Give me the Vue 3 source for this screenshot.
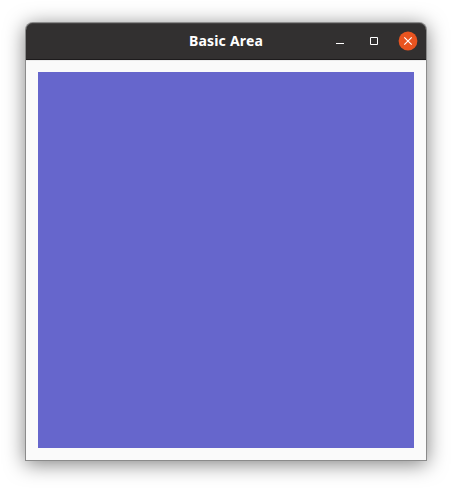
<script setup>
const title = 'Basic Area'
</script>

<template>
  <main class="desktop">
    <section class="window">
      <header class="titlebar">
        <h1 class="title">{{ title }}</h1>
        <div class="controls">
          <button class="control" aria-label="Minimize">
            <svg width="18" height="18" viewBox="0 0 18 18"><path d="M5 11.5h8" stroke="#fff" /></svg>
          </button>
          <button class="control" aria-label="Maximize">
            <svg width="18" height="18" viewBox="0 0 18 18"><path d="M5.5 5.5h7v7h-7z" fill="none" stroke="#fff" /></svg>
          </button>
          <button class="control" aria-label="Close">
            <svg width="18" height="18" viewBox="0 0 18 18">
              <circle cx="9" cy="9" r="9.4" fill="#e95420" />
              <path d="M5.3 5.3l7.4 7.4M12.7 5.3l-7.4 7.4" stroke="#fff" stroke-width="1.2" />
            </svg>
          </button>
        </div>
      </header>
      <div class="content">
        <div class="area"></div>
      </div>
    </section>
  </main>
</template>

<style>
body {
  background: #fff;
}
</style>

<style scoped>
.desktop {
  box-sizing: border-box;
  height: 489px;
  padding: 23px 26px 29px;
  overflow: hidden;
}
.window {
  width: 400px;
  height: 437px;
  display: flex;
  flex-direction: column;
  border-radius: 7px 7px 0 0;
  background: #fafafa;
  box-shadow: 0 0 0 1px #8b8b8b, 0 3px 20px 1px rgba(0, 0, 0, 0.5);
}
.titlebar {
  box-sizing: border-box;
  height: 37px;
  display: grid;
  grid-template-columns: 1fr auto 1fr;
  align-items: center;
  padding: 0 9px;
  border-bottom: 1px solid #1d1b1c;
  border-radius: 7px 7px 0 0;
  background: #323030;
  box-shadow: inset 0 1px #444242;
}
.title {
  grid-column: 2;
  margin: 0;
  color: #fff;
  font: 700 14px/20px "Noto Sans", "Open Sans", sans-serif;
  letter-spacing: 0.2px;
  white-space: nowrap;
}
.controls {
  display: flex;
  justify-content: flex-end;
  gap: 16px;
}
.control {
  width: 18px;
  height: 18px;
  padding: 0;
  border: 0;
  background: transparent;
}
.control svg {
  display: block;
  overflow: visible;
}
.content {
  flex: 1;
  display: flex;
  padding: 12px;
  box-shadow: inset 0 1px #ececec;
}
.area {
  flex: 1;
  background: #6666cc;
}
</style>
